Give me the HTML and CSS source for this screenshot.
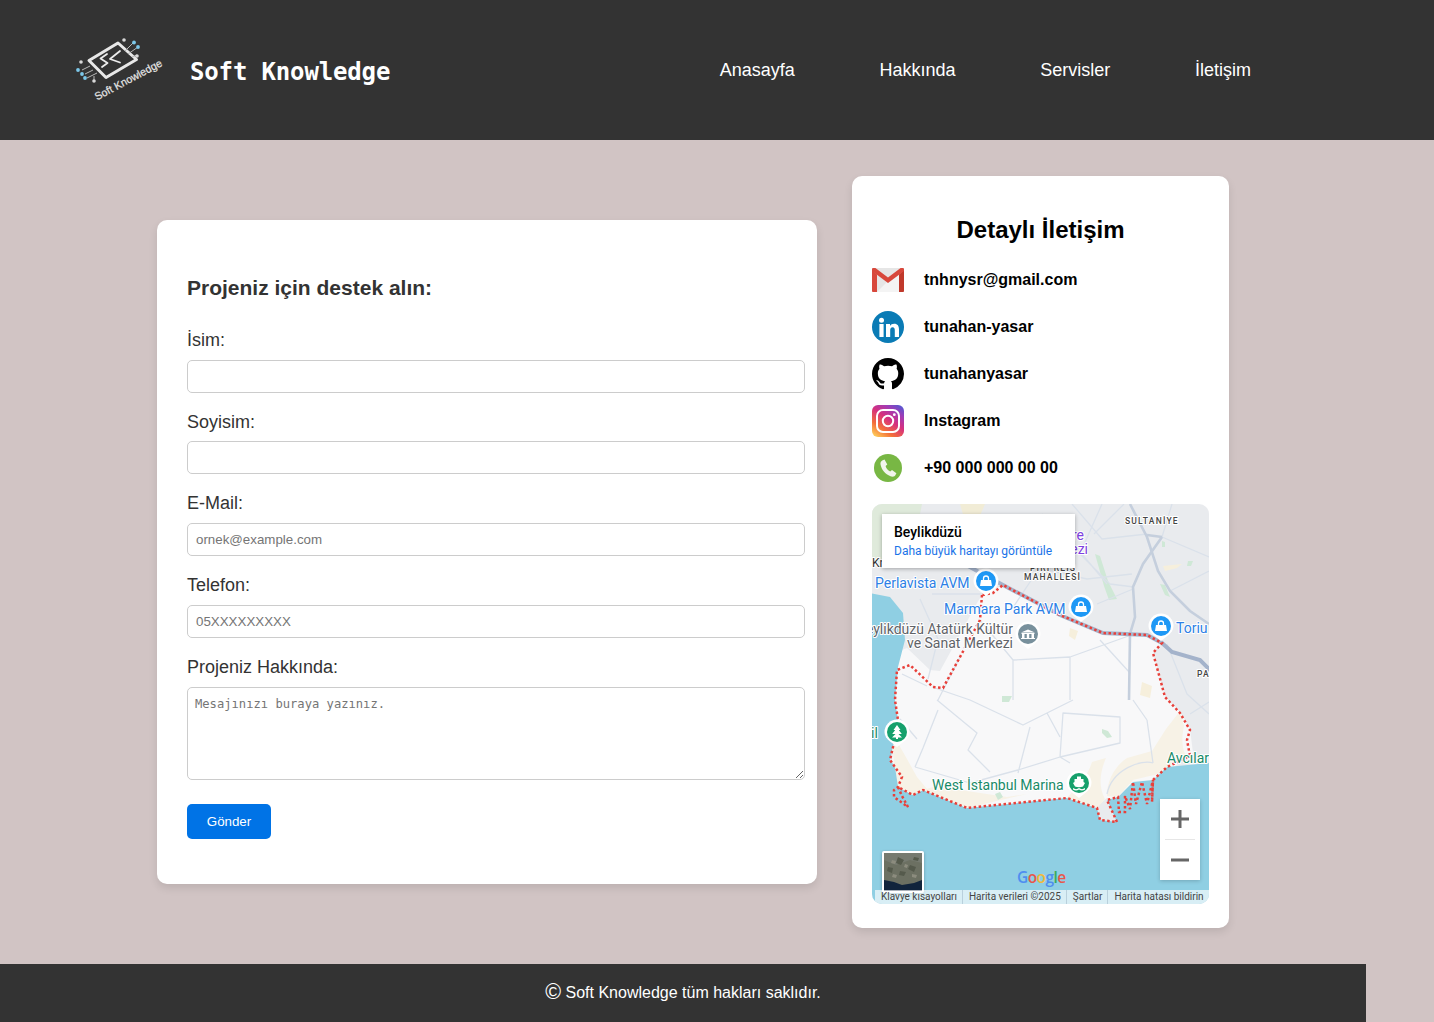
FILE: index.html
```html
<!DOCTYPE html>
<html lang="tr">
<head>
<meta charset="utf-8">
<title>Soft Knowledge</title>
<link rel="stylesheet" href="styles.css">
</head>
<body>
<header class="site-header">
  <div class="brand">
    <svg class="logo" viewBox="0 0 90 66" width="90" height="66" aria-hidden="true">
      <path d="M14 21.500L43 4 61.500 20.500 31 38.500z" fill="none" stroke="#e8e8e8" stroke-width="3" stroke-linejoin="round"/>
      <path d="M32 15l-6.500 4.500 7 4.500-5.500 4M45 12l-10 8 10 3.500" fill="none" stroke="#ececec" stroke-width="1.800" stroke-linecap="round" stroke-linejoin="round"/>
      <g fill="none" stroke="#b8b8b8" stroke-width="1">
        <path d="M50 12l8-8M53 15l10-7M57 18l5-2M7 31l8-4M10 35l8-4M12 39l10-5M19 42v-5"/>
      </g>
      <g>
        <circle cx="59" cy="3.500" r="1.900" fill="#7cc8ea"/><circle cx="63" cy="8" r="1.900" fill="#7cc8ea"/><circle cx="62" cy="17" r="1.800" fill="#d8d8d8"/><circle cx="49" cy="1" r="1.800" fill="#d8d8d8"/>
        <circle cx="3" cy="31" r="1.900" fill="#7cc8ea"/><circle cx="7" cy="35" r="1.900" fill="#7cc8ea"/><circle cx="10" cy="39" r="1.900" fill="#7cc8ea"/><circle cx="6" cy="23" r="1.800" fill="#d8d8d8"/><circle cx="19" cy="42" r="1.800" fill="#d8d8d8"/>
      </g>
      <text class="logo-text" x="22" y="61.500" transform="rotate(-28 22 61.500)">Soft Knowledge</text>
    </svg>
    <span class="brand-name">Soft Knowledge</span>
  </div>
  <nav class="site-nav">
    <a href="#">Anasayfa</a>
    <a href="#">Hakkında</a>
    <a href="#">Servisler</a>
    <a href="#">İletişim</a>
  </nav>
</header>

<main class="content">
  <form class="form-card">
    <h3 class="form-title">Projeniz için destek alın:</h3>
    <label class="field-label">İsim:</label>
    <input class="field" type="text">
    <label class="field-label">Soyisim:</label>
    <input class="field" type="text">
    <label class="field-label">E-Mail:</label>
    <input class="field" type="email" placeholder="ornek@example.com">
    <label class="field-label">Telefon:</label>
    <input class="field" type="tel" placeholder="05XXXXXXXXX">
    <label class="field-label">Projeniz Hakkında:</label>
    <textarea class="field field-area" placeholder="Mesajınızı buraya yazınız."></textarea>
    <button class="submit" type="button">Gönder</button>
  </form>

  <aside class="contact-card">
    <h2 class="contact-title">Detaylı İletişim</h2>
    <ul class="contact-list">
      <li class="contact-row">
        <svg class="contact-icon" viewBox="0 0 32 32" aria-hidden="true">
          <path d="M1 4h30a1 1 0 0 1 1 1v22a1 1 0 0 1-1 1H1a1 1 0 0 1-1-1V5a1 1 0 0 1 1-1z" fill="#e6e6e6"/>
          <path d="M5 28L16 17l11-7v18z" fill="#f4f4f4"/>
          <path d="M0 6v21a1 1 0 0 0 1 1h4V10.500z" fill="#d8483c"/>
          <path d="M27 10.500V28h4a1 1 0 0 0 1-1V6z" fill="#c0392b"/>
          <path d="M0 5c0-1 .8-1 1.600-1h1.800L16 13.500 28.600 4h1.800c.8 0 1.600 0 1.600 1v2L16 19 0 7z" fill="#d8483c"/>
        </svg>
        <span>tnhnysr@gmail.com</span>
      </li>
      <li class="contact-row">
        <svg class="contact-icon" viewBox="0 0 32 32" aria-hidden="true">
          <circle cx="16" cy="16" r="16" fill="#0a7bb5"/>
          <circle cx="9.500" cy="9.300" r="2.500" fill="#fff"/>
          <rect x="7.400" y="13" width="4.200" height="13" fill="#fff"/>
          <path d="M14 13h4v1.900c.8-1.300 2.300-2.200 4.200-2.200 3.500 0 4.800 2.200 4.800 5.800V26h-4.200v-6.600c0-1.800-.5-3.100-2.200-3.100-1.800 0-2.400 1.300-2.400 3.100V26H14z" fill="#fff"/>
        </svg>
        <span>tunahan-yasar</span>
      </li>
      <li class="contact-row">
        <svg class="contact-icon" viewBox="0 0 16 16" aria-hidden="true">
          <path fill="#000" d="M8 0C3.580 0 0 3.580 0 8c0 3.540 2.290 6.530 5.470 7.590.4.070.55-.17.55-.38 0-.19-.01-.82-.01-1.490-2.010.37-2.530-.49-2.690-.94-.09-.23-.48-.94-.82-1.130-.28-.15-.68-.52-.01-.53.63-.01 1.080.58 1.230.82.72 1.210 1.870.87 2.330.66.070-.52.28-.87.51-1.070-1.780-.2-3.640-.89-3.640-3.950 0-.87.31-1.590.82-2.150-.08-.2-.36-1.020.08-2.120 0 0 .67-.21 2.200.82.64-.18 1.320-.27 2-.27.68 0 1.360.09 2 .27 1.530-1.040 2.200-.82 2.200-.82.44 1.100.16 1.920.08 2.120.51.56.82 1.270.82 2.150 0 3.070-1.870 3.750-3.650 3.950.29.25.54.73.54 1.480 0 1.070-.01 1.930-.01 2.200 0 .21.15.46.55.38A8.013 8.013 0 0 0 16 8c0-4.420-3.580-8-8-8z"/>
        </svg>
        <span>tunahanyasar</span>
      </li>
      <li class="contact-row">
        <svg class="contact-icon" viewBox="0 0 32 32" aria-hidden="true">
          <defs>
            <linearGradient id="insta" x1="0.150" y1="1" x2="0.850" y2="0">
              <stop offset="0" stop-color="#fdc858"/>
              <stop offset="0.250" stop-color="#f4703a"/>
              <stop offset="0.550" stop-color="#d6307e"/>
              <stop offset="0.800" stop-color="#a13bb5"/>
              <stop offset="1" stop-color="#5a55cf"/>
            </linearGradient>
          </defs>
          <rect width="32" height="32" rx="6" fill="url(#insta)"/>
          <rect x="5" y="5" width="22" height="22" rx="6" fill="none" stroke="#fff" stroke-width="2"/>
          <circle cx="16" cy="16" r="5.200" fill="none" stroke="#fff" stroke-width="2"/>
          <circle cx="22.300" cy="9.700" r="1.400" fill="#fff"/>
        </svg>
        <span>Instagram</span>
      </li>
      <li class="contact-row">
        <svg class="contact-icon" viewBox="0 0 32 32" aria-hidden="true">
          <circle cx="16" cy="16" r="14" fill="#78b744"/>
          <path d="M10.200 8.400l2.300-1 2.800 5-1.700 1.500c.6 2.400 2.300 4.400 4.600 5.500l1.800-1.500 4.400 3.300-1.200 2.300c-1 1.300-3 1.500-4.700.8-5.300-2.200-9-6.500-10-12-.3-1.700.4-3.100 1.700-3.900z" fill="#f1f5ec"/>
        </svg>
        <span>+90 000 000 00 00</span>
      </li>
    </ul>

    <div class="map">
      <svg class="map-canvas" viewBox="0 0 337 400" width="337" height="400">
        <defs>
          <g id="pin-shape">
            <path d="M-12.500 0a12.500 12.500 0 1 1 25 0c0 4-2.500 7-5 9L0 15l-7.500-6c-2.500-2-5-5-5-9z" fill="#fff"/>
          </g>
          <g id="bag">
            <path d="M-5 -1h10l1 6h-12z" fill="#fff"/>
            <path d="M-2.500 -1v-1.500a2.500 2.500 0 0 1 5 0v1.500" fill="none" stroke="#fff" stroke-width="1.300"/>
          </g>
        </defs>
        <rect width="337" height="400" fill="#e9ebee"/>
        <path d="M0 0H50L44 30 30 50 0 60z" fill="#dfeadb"/>
        <path d="M88 0h25l-6 14H92z" fill="#f1ecd6"/>
        <!-- peninsula -->
        <path d="M110 91l21-10 57 30 43 18 44 2 15 8-9 10 12 44 15 15 10 17 3 24-23 17-14 12-20 2-15 15-11 5-3-6-11 9-26-7-100 10-44-18-15 8-11-20-8-20 3-27-5-20 2-30 2-30 13-5 23 22 10 1 17-31 20-37z" fill="#f8f8f9"/>
        <!-- water -->
        <path d="M-2 89L18 93 31 109 33 136 26 163 23 196 26 216 21 243 18 256 30 273 26 283 41 291 51 286 95 304 195 294 225 304 228 316 245 318 235 296 246 293 261 278 281 276 295 263 337 259V400H-2z" fill="#8fcfe3"/>
        <!-- beaches -->
        <path d="M295 263l-9 7-25 6-15 17-11-1c0-16 8-30 20-38l25-7 14-22 14-18 4 15c-3 14-2 26 4 32z" fill="#f7f2e6"/>
        <path d="M195 294c10-12 20-20 25-36l14-4c-6 14-8 28-1 41l-8 9z" fill="#f7f2e6"/>
        <path d="M51 286l14-4 30 5 40 6 20-3-60 14z" fill="#f7f2e6"/>
        <path d="M20 243l7-2 8 14 10 18 10 12-4 1-10 5-15-8z" fill="#f7f2e6"/>
        <!-- green patches -->
        <g fill="#cfe8d6">
          <path d="M223 50l5 2 8 25 9 18-8 1-5-14z"/>
          <path d="M316 57h5l-2 5h-4z"/>
          <path d="M288 80l5 1 5 12-5-2z"/>
          <path d="M290 37l3 1v5h-3z"/>
          <path d="M130 192h10l-3 6h-7z"/>
          <path d="M230 225l6 2 4 6-5 1-5-5z"/>
          <path d="M123 290l5-2 3 5-5 3z"/>
        </g>
        <g fill="#f6efdc">
          <path d="M198 124l8 3-3 9-6-4z"/>
          <path d="M270 178l10 4-2 12-10-3z"/>
          <path d="M291 62l19-2-5 4-12 3z"/>
        </g>
        <!-- minor roads -->
        <g fill="none" stroke="#dae1ea" stroke-width="1.300" stroke-linejoin="round">
          <path d="M20 60L110 40 150 60 215 75 260 70M170 10l40 40 25 30M230 0l-20 45-50 30-20 30M200 0l30 35 45-5M60 90h50M48 95l18 40-10 40M208 50l30 30 24 3M225 100l36-15M290 33l47 20M300 0l-10 33M298 87l39-20M252 0l-30 30"/>
          <path d="M98 196l53 25 24-12 26-13M65 196l40 33-9 17 22 22M43 263l8-19 15-38M158 223l-12 46M191 209l-3 44 60-14v-26zM175 209l13 24M43 263l55 16 48-13 42-13 10 6M281 259c-11-4-41 6-46 31M141 156l57-3 64-23M198 153v43M108 116l33 40v40M228 136l30 33M88 153l-22 43M275 216l6 43M261 196l14 20M295 140l20 50 22 20M318 210l19-12"/>
          <path d="M28 215l17 20M30 170l25 12M60 183l38 13"/>
        </g>
        <!-- highways -->
        <g fill="none" stroke="#c5cfdd" stroke-width="2.600">
          <path d="M258 0l17 33 11 34 12 20 20 20 19 13"/>
          <path d="M290 33l-19 27-10 23 2 30-5 17-1 66"/>
          <path d="M275 31l15 2"/>
        </g>
        <path d="M96 62l35 19 57 30 43 18 44 2 15 8 10 9 28 8 12 12 4 10" fill="none" stroke="#a4b3cb" stroke-width="4"/>
        <!-- dotted boundary -->
        <path class="boundary" d="M110 91L108 116 88 153 71 184 61 183 38 161 25 166 23 196 26 216 21 243 18 256 30 273 26 283 22 286 22 293 36 303 30 292 26 283 41 291 51 286 95 304 195 294 225 304 228 316 245 318 235 296 246 293 247 308 253 308 253 292 258 305 261 278 264 300 270 278 275 300 281 276 280 298 281 276 295 263 318 252 315 236 318 226 308 209 293 193 281 149 290 139 275 131 231 129 188 111 131 81 121 89z"/>
        <!-- labels -->
        <text class="map-area" x="253" y="20">SULTANİYE</text>
        <text class="map-area" x="158" y="67">PİRİ REİS</text>
        <text class="map-area" x="152" y="76">MAHALLESİ</text>
        <text class="map-area" x="325" y="173">PA</text>
        <text class="map-dark" x="0" y="63">Kn</text>
        <text class="map-purple" x="212" y="36" text-anchor="end">re</text>
        <text class="map-purple" x="216" y="50" text-anchor="end">ezi</text>
        <text class="map-blue" x="3" y="84">Perlavista AVM</text>
        <text class="map-blue" x="72" y="110">Marmara Park AVM</text>
        <text class="map-blue" x="304" y="129">Toriu</text>
        <text class="map-grey" x="141" y="130" text-anchor="end">Beylikdüzü Atatürk Kültür</text>
        <text class="map-grey" x="141" y="144" text-anchor="end">ve Sanat Merkezi</text>
        <text class="map-green" x="60" y="286">West İstanbul Marina</text>
        <text class="map-green" x="295" y="259">Avcılar</text>
        <text class="map-green" x="-1" y="234">il</text>
        <!-- pins -->
        <g transform="translate(114 77)"><use href="#pin-shape"/><circle r="10" fill="#1e98f5"/><use href="#bag"/></g>
        <g transform="translate(209 103)"><use href="#pin-shape"/><circle r="10" fill="#1e98f5"/><use href="#bag"/></g>
        <g transform="translate(289 122)"><use href="#pin-shape"/><circle r="10" fill="#1e98f5"/><use href="#bag"/></g>
        <g transform="translate(156 130)"><use href="#pin-shape"/><circle r="10" fill="#78909c"/><path d="M-7-1.500L0-4.500 7-1.500zM-6.500-1h13v1h-13zM-6-0h2.500v4H-6zM-1.200-0h2.400v4h-2.400zM3.500-0H6v4H3.500zM-7 4h14v1H-7z" fill="#fff"/></g>
        <g transform="translate(25 228)"><use href="#pin-shape"/><circle r="10" fill="#16a06c"/><path d="M0-7l3.500 5H1.800l3 4H1.500l3.500 3.500H1V7h-2V5.500h-4L-1.500 2h-3.300l3-4H-3.500z" fill="#fff"/></g>
        <g transform="translate(207 279)"><use href="#pin-shape"/><circle r="10" fill="#16a06c"/><path d="M-2-6.500h4V-4h2.500v3L6 0 4 3.500c-2.500 1-5.500 1-8 0L-6 0l1.500-1v-3H-2zM-6 5c2 1.500 4 1.500 6 0 2 1.500 4 1.500 6 0v1.500c-2 1.300-4 1.300-6 0-2 1.300-4 1.300-6 0z" fill="#fff"/></g>
      </svg>

      <div class="map-info">
        <div class="map-info-title">Beylikdüzü</div>
        <a class="map-info-link" href="#">Daha büyük haritayı görüntüle</a>
      </div>

      <div class="map-zoom">
        <span class="zoom-btn"><svg viewBox="0 0 20 20" width="20" height="20" aria-hidden="true"><path d="M1 8.500h7.500V1h3v7.500H19v3h-7.500V19h-3v-7.500H1z" fill="#666"/></svg></span>
        <span class="zoom-sep"></span>
        <span class="zoom-btn"><svg viewBox="0 0 20 20" width="20" height="20" aria-hidden="true"><rect x="1" y="8.500" width="18" height="3" fill="#666"/></svg></span>
      </div>

      <div class="map-thumb">
        <svg viewBox="0 0 38 38" width="38" height="38" aria-hidden="true">
          <rect width="38" height="38" fill="#6c7062"/>
          <path d="M0 0h38v10L26 7 12 12 0 7z" fill="#767a70"/>
          <path d="M14 4l6 3-3 5-5-2zM26 12l6 2-2 5-6-3zM4 14l5 1-1 5-5-2zM16 18l6 1-2 4-5-1zM30 4l5 1-1 3-5-1z" fill="#555a4c"/>
          <path d="M8 7l4 1-1 3-4-1zM21 11l3 1-1 3-3-1zM9 21l4 1-1 3-4-1zM28 21l5 1-1 3-4-1z" fill="#8c8c7e"/>
          <path d="M0 27l10 2 8 3 12-2 8-3v11H0z" fill="#11243c"/>
        </svg>
      </div>

      <div class="map-google"><span class="g-blue">G</span><span class="g-red">o</span><span class="g-yellow">o</span><span class="g-blue">g</span><span class="g-green">l</span><span class="g-red">e</span></div>

      <div class="map-attr">
        <span>Klavye kısayolları</span>
        <span>Harita verileri ©2025</span>
        <span>Şartlar</span>
        <span>Harita hatası bildirin</span>
      </div>
    </div>
  </aside>
</main>

<footer class="site-footer">
  <p><span class="copy">©</span> Soft Knowledge tüm hakları saklıdır.</p>
</footer>
</body>
</html>
```

FILE: styles.css
```css
* { box-sizing: border-box; }
html, body { margin: 0; padding: 0; overflow: hidden; }
body {
  height: 1022px;
  background: #d1c4c4;
  font-family: "Liberation Sans", Arial, sans-serif;
  color: #333;
}

/* header */
.site-header {
  height: 140px;
  background: #333;
  display: flex;
  align-items: center;
  padding: 0 183px 0 75px;
}
.brand { display: flex; align-items: center; }
.logo { display: block; margin-top: 3px; overflow: visible; }
.logo-text { font: 10.700px "Liberation Sans", sans-serif; fill: #e6e6e6; stroke: #e6e6e6; stroke-width: .2px; }
.brand-name {
  margin: 3px 0 0 25px;
  color: #fff;
  font: bold 24px "DejaVu Sans Mono", monospace;
  letter-spacing: -.15px;
}
.site-nav { margin-left: auto; display: flex; gap: 84.700px; }
.site-nav a { color: #fff; font-size: 18px; text-decoration: none; }

/* main */
.content {
  height: 824px;
  display: flex;
  align-items: center;
  padding-left: 157px;
  gap: 35px;
}

/* form */
.form-card {
  width: 660px;
  height: 664px;
  background: #fff;
  border-radius: 10px;
  padding: 30px 12px 0 30px;
  box-shadow: 0 4px 8px rgba(0, 0, 0, .1);
}
.form-title {
  margin: 25px 0 28.110px;
  font-size: 21px;
  line-height: 26px;
  font-weight: bold;
}
.field-label {
  display: block;
  padding-top: 1px;
  font-size: 18px;
  line-height: 20.700px;
  height: 21.700px;
  margin-bottom: 9px;
}
.field {
  display: block;
  width: 618px;
  height: 33px;
  padding: 8px;
  margin: 0 0 18px;
  border: 1px solid #ccc;
  border-radius: 5px;
  background: #fff;
  font-family: "Liberation Sans", Arial, sans-serif;
  font-size: 13.330px;
}
.field::placeholder { color: #757575; opacity: 1; }
.field-area {
  height: 93px;
  margin-bottom: 24px;
  padding: 9px 8px 8px 7px;
  font-family: "DejaVu Sans Mono", monospace;
  font-size: 12.150px;
  resize: vertical;
}
.submit {
  display: block;
  width: 84px;
  height: 35px;
  border: 0;
  border-radius: 5px;
  background: #0073e6;
  color: #fff;
  font: 13.330px "Liberation Sans", Arial, sans-serif;
}

/* contact */
.contact-card {
  width: 377px;
  height: 752px;
  background: #fff;
  border-radius: 10px;
  padding: 20px;
  box-shadow: 0 4px 8px rgba(0, 0, 0, .1);
}
.contact-title {
  margin: 20px 0;
  font-size: 24px;
  line-height: 28px;
  color: #000;
  text-align: center;
}
.contact-list { list-style: none; margin: 0 0 20px; padding: 0; }
.contact-row {
  display: flex;
  align-items: center;
  gap: 20px;
  height: 32px;
  margin-bottom: 15px;
  font-size: 16px;
  font-weight: bold;
  color: #000;
}
.contact-row:last-child { margin-bottom: 0; }
.contact-icon { width: 32px; height: 32px; display: block; flex: none; }

/* map */
.map {
  position: relative;
  width: 337px;
  height: 400px;
  border-radius: 10px;
  overflow: hidden;
  font-family: Roboto, "Liberation Sans", sans-serif;
}
.map-canvas { display: block; }
.boundary {
  fill: none;
  stroke: #e8403a;
  stroke-width: 2.500;
  stroke-dasharray: 2.500 2.500;
}
.map-canvas text { font-family: Roboto, "Liberation Sans", sans-serif; paint-order: stroke; stroke: #fff; stroke-width: 2px; stroke-linejoin: round; }
.map-area { font-size: 8.500px; font-weight: 500; letter-spacing: 1.200px; fill: #444; }
.map-dark { font-size: 12px; fill: #333; }
.map-purple { font-size: 14px; fill: #7e3fe0; }
.map-blue { font-size: 14px; fill: #2d7fe6; }
.map-grey { font-size: 14px; fill: #5f6368; }
.map-green { font-size: 14px; fill: #188a68; }

.map-info {
  position: absolute;
  left: 10px;
  top: 10px;
  width: 193px;
  height: 54px;
  padding: 11px 12px;
  background: #fff;
  box-shadow: 0 1px 4px rgba(0, 0, 0, .3);
}
.map-info-title { font-size: 14px; font-weight: 500; line-height: 15px; color: #000; }
.map-info-link { display: block; margin-top: 4px; font-size: 12px; line-height: 14px; color: #1a73e8; text-decoration: none; }

.map-zoom {
  position: absolute;
  left: 288px;
  top: 295px;
  width: 40px;
  height: 81px;
  background: #fff;
  display: flex;
  flex-direction: column;
  box-shadow: 0 1px 4px rgba(0, 0, 0, .2);
}
.zoom-btn { flex: 1; display: flex; align-items: center; justify-content: center; }
.zoom-sep { height: 1px; margin: 0 5px; background: #e6e6e6; }

.map-thumb {
  position: absolute;
  left: 10px;
  top: 347px;
  width: 42px;
  height: 42px;
  border: 2px solid #fff;
  border-radius: 2px;
  box-shadow: 0 1px 3px rgba(0, 0, 0, .3);
}
.map-thumb svg { display: block; }

.map-google {
  position: absolute;
  left: 145px;
  top: 363px;
  font: 600 15.500px/20px "Open Sans", sans-serif;
  letter-spacing: -.6px;
}
.g-blue { color: #4f8ef0; }
.g-red { color: #e8564a; }
.g-yellow { color: #f2b93a; }
.g-green { color: #3bab5b; }

.map-attr {
  position: absolute;
  left: 3px;
  right: 0;
  bottom: 0;
  height: 14px;
  display: flex;
  background: rgba(255, 255, 255, .65);
  font-size: 10px;
  line-height: 14px;
  color: #444;
}
.map-attr span { padding: 0 5px 0 6px; border-left: 1px solid #b9d0dc; white-space: nowrap; }
.map-attr span:first-child { border-left: 0; }

/* footer */
.site-footer {
  width: 1366px;
  height: 58px;
  background: #333;
  color: #fff;
  font-size: 16px;
  display: flex;
  align-items: center;
  justify-content: center;
}
.site-footer p { margin: 0; }
.copy { font-size: 21.500px; line-height: 0; vertical-align: -1px; }
```
